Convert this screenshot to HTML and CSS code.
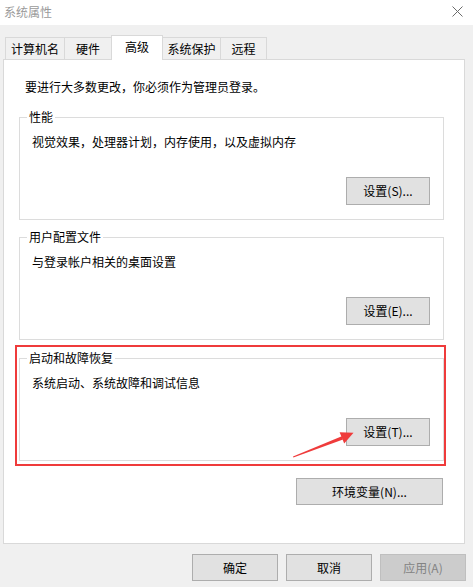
FILE: index.html
```html
<!DOCTYPE html>
<html lang="zh-CN">
<head>
<meta charset="utf-8">
<title>系统属性</title>
<link rel="stylesheet" href="styles.css">
</head>
<body>
<div class="window">
  <div class="titlebar">
    <span class="title">系统属性</span>
    <svg class="close" width="11" height="11" viewBox="0 0 11 11"><path d="M0.5 0.5 L10.5 10.5 M10.5 0.5 L0.5 10.5" stroke="#6b6b6b" stroke-width="1" fill="none"/></svg>
  </div>
  <div class="body">
    <div class="tabs">
      <div class="tab t1">计算机名</div>
      <div class="tab t2">硬件</div>
      <div class="tab t3 active">高级</div>
      <div class="tab t4">系统保护</div>
      <div class="tab t5">远程</div>
    </div>
    <div class="panel">
      <p class="note">要进行大多数更改，你必须作为管理员登录。</p>
      <fieldset class="group g1">
        <legend>性能</legend>
        <p class="desc">视觉效果，处理器计划，内存使用，以及虚拟内存</p>
        <div class="row"><button class="btn small">设置(S)...</button></div>
      </fieldset>
      <fieldset class="group g2">
        <legend>用户配置文件</legend>
        <p class="desc">与登录帐户相关的桌面设置</p>
        <div class="row"><button class="btn small">设置(E)...</button></div>
      </fieldset>
      <fieldset class="group g3">
        <legend>启动和故障恢复</legend>
        <p class="desc">系统启动、系统故障和调试信息</p>
        <div class="row"><button class="btn small">设置(T)...</button></div>
      </fieldset>
      <div class="row env-row"><button class="btn env">环境变量(N)...</button></div>
      <div class="highlight"></div>
      <svg class="arrow" width="460" height="483" viewBox="0 0 460 483">
        <polygon points="289,396.6 289.4,397.4 339,379.4 337.8,376.2" fill="#ef3b3b"/>
        <polygon points="349.5,372.8 335.6,372.2 340.2,383.6" fill="#ef3b3b"/>
      </svg>
    </div>
    <div class="footer">
      <button class="btn foot">确定</button>
      <button class="btn foot">取消</button>
      <button class="btn foot disabled">应用(A)</button>
    </div>
  </div>
</div>
</body>
</html>
```

FILE: styles.css
```css
* { box-sizing: border-box; }
html, body {
  margin: 0;
  padding: 0;
}
body {
  width: 473px;
  height: 587px;
  overflow: hidden;
  background: #f0f0f0;
  font-family: "Noto Sans CJK SC", "Microsoft YaHei", sans-serif;
  font-size: 12px;
  line-height: 16px;
  color: #000;
}
.titlebar {
  height: 25px;
  background: #fff;
  display: flex;
  align-items: center;
  justify-content: space-between;
  padding: 0 10px 1px 4px;
}
.title {
  color: #9a9a9a;
}
.close {
  display: block;
  margin-top: -2px;
}
.body {
  padding: 10px 0 0 3px;
}
.tabs {
  display: flex;
  align-items: flex-start;
  height: 24px;
  padding-left: 2px;
  position: relative;
  z-index: 2;
}
.tab {
  height: 22px;
  margin-top: 2px;
  margin-right: -1px;
  border: 1px solid #d9d9d9;
  border-bottom: none;
  background: #f0f0f0;
  display: flex;
  align-items: center;
  justify-content: center;
  padding-top: 1px;
}
.t1 { width: 60px; }
.t2 { width: 48px; }
.t3 { width: 52px; }
.t4 { width: 59px; }
.t5 { width: 47px; }
.tab.active {
  height: 25px;
  margin-top: 0;
  background: #fff;
  padding-top: 0;
  padding-bottom: 2px;
}
.panel {
  position: relative;
  width: 462px;
  height: 485px;
  background: #fff;
  border: 1px solid #d9d9d9;
  padding: 0 20px 0 15px;
}
.note {
  margin: 19px 0 0 6px;
}
p { margin: 0; }
.group {
  margin: 14px 0 0 0;
  padding: 0 0 14px 0;
  border: 1px solid #dcdcdc;
  min-width: 0;
}
.g2 { margin-top: 9px; }
.g3 { margin-top: 10px; }
.group legend {
  margin-left: 7px;
  padding: 0 2px;
  line-height: 16px;
}
.desc {
  margin: 9px 0 0 12px;
}
.row {
  display: flex;
  justify-content: flex-end;
}
.group .row {
  margin-top: 27px;
  padding-right: 13px;
}
.btn {
  font-family: inherit;
  font-size: 12px;
  line-height: 16px;
  color: #000;
  background: #e1e1e1;
  border: 1px solid #adadad;
  padding: 0;
  margin: 0;
  display: flex;
  align-items: center;
  justify-content: center;
}
.small {
  width: 84px;
  height: 28px;
}
.env-row {
  margin-top: 17px;
  padding-right: 1px;
}
.env {
  width: 147px;
  height: 27px;
}
.highlight {
  position: absolute;
  left: 11px;
  top: 285px;
  width: 431px;
  height: 121px;
  border: 2px solid #ef3b3b;
  pointer-events: none;
}
.arrow {
  position: absolute;
  left: 0;
  top: 0;
  pointer-events: none;
}
.footer {
  display: flex;
  justify-content: flex-end;
  gap: 8px;
  padding: 10px 7px 0 0;
}
.foot {
  width: 86px;
  height: 27px;
}
.foot.disabled {
  background: #cccccc;
  border-color: #bfbfbf;
  color: #838383;
}
```
